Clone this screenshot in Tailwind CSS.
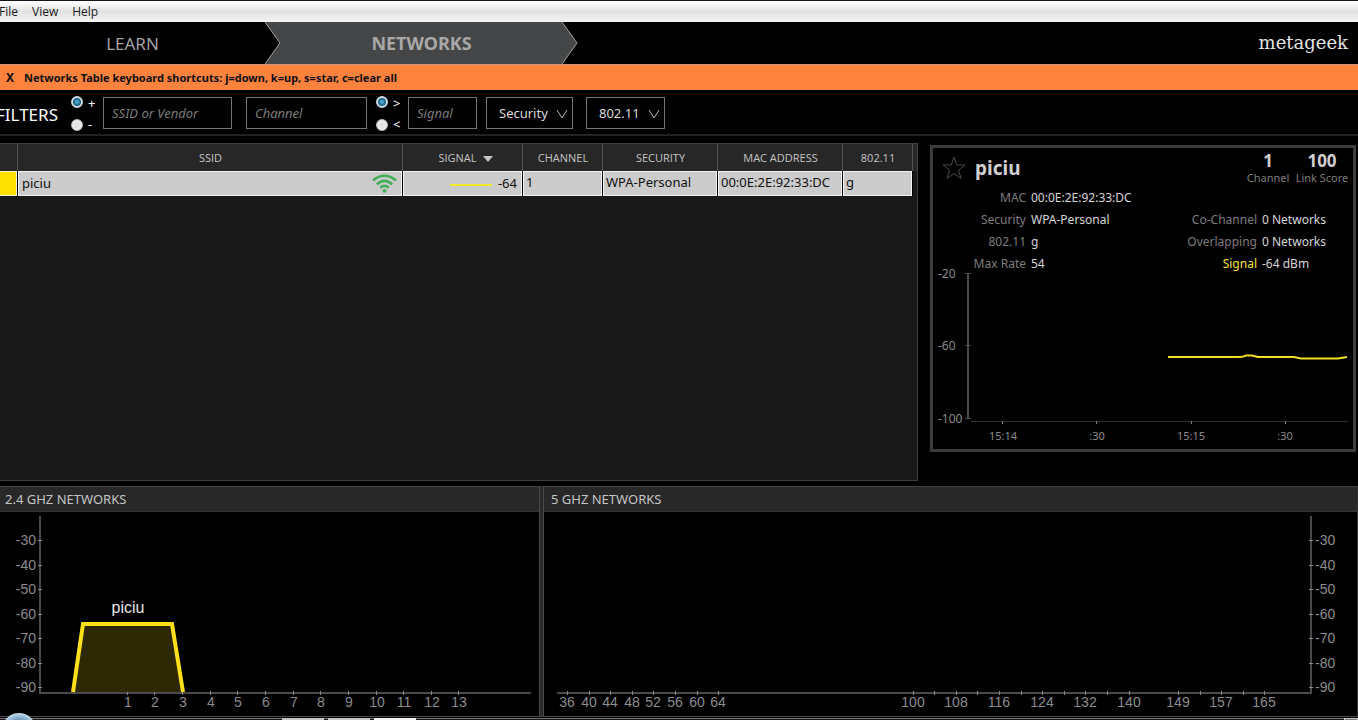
<!DOCTYPE html>
<html lang="en">
<head>
<meta charset="utf-8">
<title>metageek – Networks</title>
<script src="https://cdn.jsdelivr.net/npm/@tailwindcss/browser@4"></script>
</head>
<body class="flex min-h-screen flex-col overflow-hidden bg-black font-['Noto_Sans',sans-serif] text-[13px] text-[#d0d0d0]">

<header>
  <div class="h-px bg-[#14121c]"></div>
  <div class="-ml-px flex h-[21px] items-center gap-[14px] bg-linear-to-b from-white via-[#e2e2e2] to-[#f4f4f4] pt-px font-['Open_Sans',sans-serif] text-[12px] leading-[20px] text-[#1a1a1a]" role="menubar">
    <button type="button" role="menuitem">File</button>
    <button type="button" role="menuitem">View</button>
    <button type="button" role="menuitem">Help</button>
  </div>
  <nav class="flex h-[42px] items-stretch">
    <button type="button" class="w-[265px] pt-px text-[17px] text-[#a3a3a3]">LEARN</button>
    <svg class="h-[42px] w-4" viewBox="0 0 16 42"><path d="M0 0H16V42H0L15 21Z" fill="#454647"/><path d="M0 0L15 21L0 42" fill="none" stroke="#a0a0a0"/></svg>
    <button type="button" class="w-[281px] bg-[#454647] pt-px text-[18px] font-bold text-[#a8a8a8]" aria-current="page">NETWORKS</button>
    <svg class="h-[42px] w-4" viewBox="0 0 16 42"><path d="M0 0L15 21L0 42Z" fill="#454647"/><path d="M0 0L15 21L0 42" fill="none" stroke="#a0a0a0"/></svg>
    <a href="#" class="mr-[10px] ml-auto self-center font-['DejaVu_Serif',serif] text-[18px] leading-[24px] text-[#e6e6e6]">metageek</a>
  </nav>
  <div class="flex h-[26px] items-center gap-[10px] border-t border-[#c99878] bg-[#fd823d] pt-px pl-[6px] text-[11px] font-bold text-[#111]">
    <button type="button" class="text-[12px]" aria-label="Close">X</button>
    <p>Networks Table keyboard shortcuts: j=down, k=up, s=star, c=clear all</p>
  </div>
</header>

<form class="flex h-[46px] items-center border-b-2 border-[#222] pt-px text-white">
  <h2 class="-ml-1 w-[75px] pt-1 text-[17px]">FILTERS</h2>
  <fieldset class="flex w-8 flex-col text-[13px] leading-[21px]">
    <label class="flex items-center gap-[5px]"><input type="radio" name="match" checked class="size-[12px] appearance-none rounded-full border border-[#c8d4da] bg-radial from-[#dddddd] to-[#f4f4f4] checked:from-[#5cc0e8] checked:via-[#1c5f80] checked:via-50% checked:to-[#dfe8ec] checked:to-65%"><span class="pt-[3px]">+</span></label>
    <label class="flex items-center gap-[5px]"><input type="radio" name="match" class="size-[12px] appearance-none rounded-full border border-[#bbbbbb] bg-radial from-[#dddddd] to-[#f4f4f4]">-</label>
  </fieldset>
  <input type="text" aria-label="SSID or Vendor" placeholder="SSID or Vendor" class="h-8 w-[129px] border border-[#757575] px-2 text-[13px] placeholder:italic placeholder:text-[#7c7c7c]">
  <input type="text" aria-label="Channel" placeholder="Channel" class="ml-[14px] h-8 w-[121px] border border-[#757575] px-2 text-[13px] placeholder:italic placeholder:text-[#7c7c7c]">
  <fieldset class="ml-[9px] flex w-8 flex-col text-[13px] leading-[21px]">
    <label class="flex items-center gap-[5px]"><input type="radio" name="level" checked class="size-[12px] appearance-none rounded-full border border-[#c8d4da] bg-radial from-[#dddddd] to-[#f4f4f4] checked:from-[#5cc0e8] checked:via-[#1c5f80] checked:via-50% checked:to-[#dfe8ec] checked:to-65%"><span class="pt-[3px]">&gt;</span></label>
    <label class="flex items-center gap-[5px]"><input type="radio" name="level" class="size-[12px] appearance-none rounded-full border border-[#bbbbbb] bg-radial from-[#dddddd] to-[#f4f4f4]">&lt;</label>
  </fieldset>
  <input type="text" aria-label="Signal" placeholder="Signal" class="h-8 w-[69px] border border-[#757575] px-2 text-[13px] placeholder:italic placeholder:text-[#7c7c7c]">
  <div class="relative ml-[9px] h-8 w-[87px]">
    <select aria-label="Security" class="size-full appearance-none border border-[#757575] bg-black pt-[2px] pl-3 text-[13px] text-[#dadada]"><option>Security</option></select>
    <svg class="pointer-events-none absolute top-[11px] right-[5px] h-3 w-3" viewBox="0 0 12 12"><path d="M1 2L6 10L11 2" fill="none" stroke="#b5b5b5"/></svg>
  </div>
  <div class="relative ml-[13px] h-8 w-[79px]">
    <select aria-label="802.11" class="size-full appearance-none border border-[#757575] bg-black pt-[2px] pl-3 text-[13px] text-[#dadada]"><option>802.11</option></select>
    <svg class="pointer-events-none absolute top-[11px] right-[5px] h-3 w-3" viewBox="0 0 12 12"><path d="M1 2L6 10L11 2" fill="none" stroke="#b5b5b5"/></svg>
  </div>
</form>

<main class="mt-[7px] flex flex-1 flex-col">
  <div class="flex gap-3 pr-[2px]">
    <section class="min-h-[338px] flex-1 border-t border-r border-b border-[#3e3e3e] bg-[#181818]">
      <table class="w-full table-fixed border-separate border-spacing-0 text-[13px]">
        <colgroup><col class="w-[18px]"><col><col class="w-[120px]"><col class="w-[80px]"><col class="w-[115px]"><col class="w-[125px]"><col class="w-[70px]"><col class="w-1"></colgroup>
        <thead class="bg-[#272727] font-['Open_Sans',sans-serif] text-[11px] text-[#c4c4c4]">
          <tr class="h-[27px]">
            <th class="border-r border-[#505050] p-0"></th>
            <th class="border-r border-[#505050] p-0 pt-[2px] pl-px font-normal">SSID</th>
            <th class="border-r border-[#505050] p-0 pt-[2px] font-normal"><button type="button" class="inline-flex items-center gap-[6px] pl-[6px]">SIGNAL <svg class="h-[6px] w-[10px]" viewBox="0 0 10 6"><path d="M0 0H10L5 6Z" fill="#c4c4c4"/></svg></button></th>
            <th class="border-r border-[#505050] p-0 pt-[2px] pl-px font-normal">CHANNEL</th>
            <th class="border-r border-[#505050] p-0 pt-[2px] pl-px font-normal">SECURITY</th>
            <th class="border-r border-[#505050] p-0 pt-[2px] pl-px font-normal">MAC ADDRESS</th>
            <th class="border-r border-[#505050] p-0 pt-[2px] pl-px font-normal">802.11</th>
            <th class="p-0"></th>
          </tr>
        </thead>
        <tbody class="bg-black text-[#111]">
          <tr class="h-[25px]">
            <td class="border-r border-black p-0"><div class="h-[25px] border border-l-0 border-[#f0eecb] bg-[#ffe100]"></div></td>
            <td class="border-r border-black p-0"><div class="flex h-[25px] items-center justify-between border border-[#f2f2f2] bg-[#cbcbcb] pr-1 pl-[3px] leading-[20px]"><span class="pb-[2px]">piciu</span>
              <svg class="h-[19px] w-[25px]" viewBox="0 0 25 19" fill="none" stroke="#43ad55" stroke-width="2.6"><path d="M1 6.500Q12.500 -3 24 6.500"/><path d="M4.800 10.300Q12.500 3.500 20.200 10.300"/><path d="M8.300 13.700Q12.500 10 16.700 13.700"/><circle cx="12.500" cy="16.800" r="1.900" fill="#43ad55" stroke="none"/></svg></div></td>
            <td class="border-r border-black p-0"><div class="flex h-[25px] items-center justify-end gap-[6px] border border-[#f2f2f2] bg-[#cbcbcb] pr-1 leading-[20px]"><span class="mt-[2px] h-[2px] w-[42px] bg-[#f0ea26]"></span><span class="pb-[2px]">-64</span></div></td>
            <td class="border-r border-black p-0"><div class="h-[25px] border border-[#f2f2f2] bg-[#cbcbcb] pl-[2px] leading-[20px]">1</div></td>
            <td class="border-r border-black p-0"><div class="h-[25px] border border-[#f2f2f2] bg-[#cbcbcb] pl-[2px] leading-[20px]">WPA-Personal</div></td>
            <td class="border-r border-black p-0"><div class="h-[25px] border border-[#f2f2f2] bg-[#cbcbcb] pl-[2px] leading-[20px]">00:0E:2E:92:33:DC</div></td>
            <td class="border-r border-black p-0"><div class="h-[25px] border border-[#f2f2f2] bg-[#cbcbcb] pl-[2px] leading-[20px]">g</div></td>
            <td class="bg-[#181818] p-0"></td>
          </tr>
        </tbody>
      </table>
    </section>

    <aside class="mt-[2px] h-[307px] w-[426px] border-3 border-[#3d3d3d]">
      <div class="flex h-10 items-center pl-[9px]">
        <button type="button" aria-label="Star network"><svg class="size-6" viewBox="0 0 24 24"><path d="M12 1L14.800 9H23L16.500 14L19 22.500L12 17.500L5 22.500L7.500 14L1 9H9.200Z" fill="none" stroke="#474747"/></svg></button>
        <h2 class="ml-[9px] text-[19px] font-bold">piciu</h2>
        <div class="ml-auto w-[50px] text-center text-[11px] leading-[14px] text-[#7d7d7d]"><strong class="block text-[17px] leading-[20px] text-[#d0d0d0]">1</strong>Channel</div>
        <div class="mr-[2px] w-[58px] text-center text-[11px] leading-[14px] text-[#7d7d7d]"><strong class="block text-[17px] leading-[20px] text-[#d0d0d0]">100</strong>Link Score</div>
      </div>
      <div class="flex h-[87px] items-end justify-between text-[12px] leading-[22px] text-[#d6d6d6]">
        <dl class="grid grid-cols-[93px_auto] gap-x-[5px] [&_dt]:text-right [&_dt]:text-[#7d7d7d]">
          <dt>MAC</dt><dd>00:0E:2E:92:33:DC</dd>
          <dt>Security</dt><dd>WPA-Personal</dd>
          <dt>802.11</dt><dd>g</dd>
          <dt>Max Rate</dt><dd>54</dd>
        </dl>
        <dl class="grid grid-cols-[93px_91px] gap-x-[5px]">
          <dt class="text-right text-[#7d7d7d]">Co-Channel</dt><dd>0 Networks</dd>
          <dt class="text-right text-[#7d7d7d]">Overlapping</dt><dd>0 Networks</dd>
          <dt class="text-right text-[#f5e23a]">Signal</dt><dd>-64 dBm</dd>
        </dl>
      </div>
      <svg class="-mt-[10px] h-auto w-full" viewBox="0 0 420 180" font-size="12" fill="#8a8a8a" role="img" aria-label="Signal over time">
        <g stroke="#4a4a4a" fill="none"><path d="M35 9V154" stroke-width="2"/><path d="M32 8.500H38M32 80.500H38M32 153.500H38"/></g>
        <path d="M38 156.500H415" stroke="#303030"/>
        <path d="M69.500 156V159M163.500 156V159M258.500 156V159M352.500 156V159" stroke="#808080"/>
        <g><text x="5" y="13">-20</text><text x="5" y="85">-60</text><text x="5" y="158">-100</text></g>
        <g font-size="11" text-anchor="middle"><text x="70" y="175">15:14</text><text x="164" y="175">:30</text><text x="258" y="175">15:15</text><text x="352" y="175">:30</text></g>
        <path d="M235 92H306Q311 92 313 90.500H319L325 92H361L368 93.500H405L414 92" fill="none" stroke="#f5de1f" stroke-width="2"/>
      </svg>
    </aside>
  </div>

  <div class="mt-[5px] flex">
    <section class="w-[539px]">
      <h2 class="h-[26px] border-t border-b border-t-[#3e3e3e] border-b-[#333] bg-[#282828] pl-[5px] text-[13px] leading-[24px] text-[#c4c4c4]">2.4 GHZ NETWORKS</h2>
      <svg class="block h-auto w-full font-['Liberation_Sans',sans-serif]" viewBox="0 0 539 204" font-size="14" fill="#8c8c8c" role="img" aria-label="2.4 GHz channels">
        <path d="M40 4V181H531" fill="none" stroke="#4a4a4a" stroke-width="2"/>
        <g id="left-ticks" stroke="#8c8c8c"></g>
        <g id="left-y" text-anchor="end"></g>
        <g id="left-x" text-anchor="middle"></g>
        <path d="M73 180L83 112H172L183 180" fill="#2f2903" stroke="#ffe01a" stroke-width="4"/>
        <text x="128" y="101" text-anchor="middle" fill="#e6e6e6" font-size="16">piciu</text>
      </svg>
    </section>
    <div class="w-[5px] border-r border-l border-[#4a4a4a] bg-[#2a2a2a]"></div>
    <section class="flex-1 border-r border-[#333]">
      <h2 class="h-[26px] border-t border-b border-t-[#3e3e3e] border-b-[#333] bg-[#282828] pl-[7px] text-[13px] leading-[24px] text-[#c4c4c4]">5 GHZ NETWORKS</h2>
      <svg class="block h-auto w-full font-['Liberation_Sans',sans-serif]" viewBox="0 0 813 204" font-size="14" fill="#8c8c8c" role="img" aria-label="5 GHz channels">
        <path d="M13 181H767V4" fill="none" stroke="#4a4a4a" stroke-width="2"/>
        <g id="right-ticks" stroke="#8c8c8c"></g>
        <g id="right-y"></g>
        <g id="right-x" text-anchor="middle"></g>
      </svg>
    </section>
  </div>
</main>

<footer class="relative h-1 border-t border-[#4a4a4a]">
  <div class="mt-px h-[2px] border-t border-[#77747f] bg-[#1a1519]"></div>
  <svg class="absolute -top-1 left-[3px] h-2 w-8" viewBox="0 0 32 8"><defs><radialGradient id="orb" gradientUnits="userSpaceOnUse" cx="16" cy="17" r="17"><stop offset=".4" stop-color="#6d6f86"/><stop offset=".7" stop-color="#7fa9cc"/><stop offset="1" stop-color="#c3dcec"/></radialGradient></defs><circle cx="16" cy="17" r="17" fill="url(#orb)"/></svg>
  <div class="absolute top-[1px] left-[282px] flex gap-1"><span class="h-[2px] w-[42px] bg-[#c8c4ca]"></span><span class="h-[2px] w-[42px] bg-[#c8c4ca]"></span><span class="h-[2px] w-[42px] bg-[#f4f4f4]"></span></div>
  <span class="absolute top-[1px] right-0 h-[2px] w-[14px] border border-b-0 border-[#cfcfcf] bg-[#777]"></span>
</footer>

<script>
const ns = 'http://www.w3.org/2000/svg';
function label(group, x, y, value) {
  const t = document.createElementNS(ns, 'text');
  t.setAttribute('x', x); t.setAttribute('y', y); t.textContent = value;
  document.getElementById(group).append(t);
}
function tick(group, d) {
  const p = document.createElementNS(ns, 'path');
  p.setAttribute('d', d);
  document.getElementById(group).append(p);
}
for (let i = 0; i < 7; i++) {
  const y = Math.round(28 + i * 24.5);
  label('left-y', 36, y + 5, -30 - i * 10);
  label('right-y', 771, y + 5, -30 - i * 10);
  tick('left-ticks', `M38 ${y + .5}H42`);
  tick('right-ticks', `M765 ${y + .5}H769`);
}
for (let c = 1; c <= 13; c++) {
  const x = Math.round(100 + c * 27.65);
  label('left-x', x, 195, c);
  tick('left-ticks', `M${x - .5} 179V183`);
}
const channelX = c => Math.round(c < 145 ? 23 + (c - 36) * 5.4 : 634 + (c - 149) * 5.4);
for (const c of [36, 40, 44, 48, 52, 56, 60, 64, 100, 108, 116, 124, 132, 140, 149, 157, 165]) label('right-x', channelX(c), 195, c);
for (const c of [36, 40, 44, 48, 52, 56, 60, 64, 100, 104, 108, 112, 116, 120, 124, 128, 132, 136, 140, 149, 153, 157, 161, 165]) tick('right-ticks', `M${channelX(c) + .5} 179V183`);
</script>
</body>
</html>
